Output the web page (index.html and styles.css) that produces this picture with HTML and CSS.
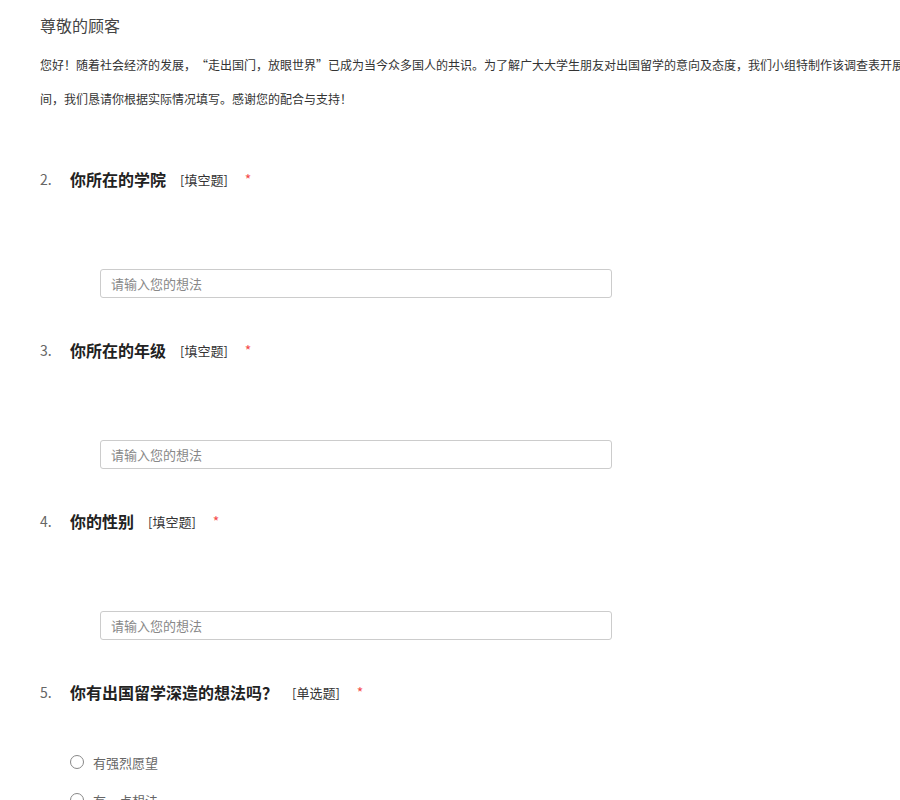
FILE: index.html
```html
<!DOCTYPE html>
<html lang="zh-CN">
<head>
<meta charset="utf-8">
<title>问卷</title>
<link rel="stylesheet" href="styles.css">
</head>
<body>
<div class="page">
  <div class="title">尊敬的顾客</div>
  <p class="intro">您好！随着社会经济的发展，“走出国门，放眼世界”已成为当今众多国人的共识。为了解广大大学生朋友对出国留学的意向及态度，我们小组特制作该调查表开展调查，耽误您几分钟的时<br>间，我们恳请你根据实际情况填写。感谢您的配合与支持！</p>

  <div class="question">
    <div class="q-head">
      <span class="q-num">2.</span>
      <span class="q-title">你所在的学院</span>
      <span class="q-type">[填空题]</span>
      <span class="q-req">*</span>
    </div>
    <input class="q-input" type="text" placeholder="请输入您的想法">
  </div>

  <div class="question">
    <div class="q-head">
      <span class="q-num">3.</span>
      <span class="q-title">你所在的年级</span>
      <span class="q-type">[填空题]</span>
      <span class="q-req">*</span>
    </div>
    <input class="q-input" type="text" placeholder="请输入您的想法">
  </div>

  <div class="question">
    <div class="q-head">
      <span class="q-num">4.</span>
      <span class="q-title">你的性别</span>
      <span class="q-type">[填空题]</span>
      <span class="q-req">*</span>
    </div>
    <input class="q-input" type="text" placeholder="请输入您的想法">
  </div>

  <div class="question">
    <div class="q-head">
      <span class="q-num">5.</span>
      <span class="q-title">你有出国留学深造的想法吗？</span>
      <span class="q-type">[单选题]</span>
      <span class="q-req">*</span>
    </div>
    <div class="options">
      <label class="option"><span class="radio"></span><span class="opt-text">有强烈愿望</span></label>
      <label class="option"><span class="radio"></span><span class="opt-text">有一点想法</span></label>
    </div>
  </div>
</div>
</body>
</html>
```
FILE: styles.css
```css
html, body {
  margin: 0;
  padding: 0;
  background: #fff;
  overflow: hidden;
}
body {
  font-family: "Microsoft YaHei", "Noto Sans CJK SC", "Noto Sans", sans-serif;
  color: #333;
  width: 900px;
  height: 800px;
  text-spacing-trim: space-all;
}
.page {
  padding-left: 40px;
  width: 1200px;
}
.title {
  margin-top: 15px;
  font-size: 16px;
  line-height: 20px;
  color: #444;
}
.intro {
  margin: 13px 0 0 0;
  font-size: 12px;
  line-height: 34px;
  color: #333;
  white-space: nowrap;
}
.question {
  margin-top: 51px;
  display: flex;
  flex-direction: column;
  align-items: flex-start;
}
.question + .question {
  margin-top: 40px;
}
.q-head {
  display: flex;
  align-items: center;
  height: 24px;
}
.q-num {
  width: 30px;
  font-size: 14px;
  color: #666;
}
.q-title {
  font-size: 16px;
  font-weight: bold;
  color: #222;
}
.q-type {
  margin-left: 14px;
  font-size: 13px;
  color: #333;
}
.q-req {
  margin-left: 17px;
  font-size: 14px;
  color: #f54c4c;
}
.q-input {
  margin-top: 78px;
  margin-left: 60px;
  width: 512px;
  height: 29px;
  box-sizing: border-box;
  border: 1px solid #ccc;
  border-radius: 3px;
  padding: 0 10px;
  font-family: inherit;
  font-size: 13px;
  color: #333;
  outline: none;
}
.q-input::placeholder {
  color: #888;
}
.options {
  margin-top: 48px;
  margin-left: 30px;
  display: flex;
  flex-direction: column;
  gap: 18px;
}
.option {
  display: flex;
  align-items: center;
  height: 20px;
}
.radio {
  width: 14px;
  height: 14px;
  box-sizing: border-box;
  border: 1px solid #888;
  border-radius: 50%;
  margin-right: 9px;
}
.opt-text {
  font-size: 13px;
  color: #666;
}
```
